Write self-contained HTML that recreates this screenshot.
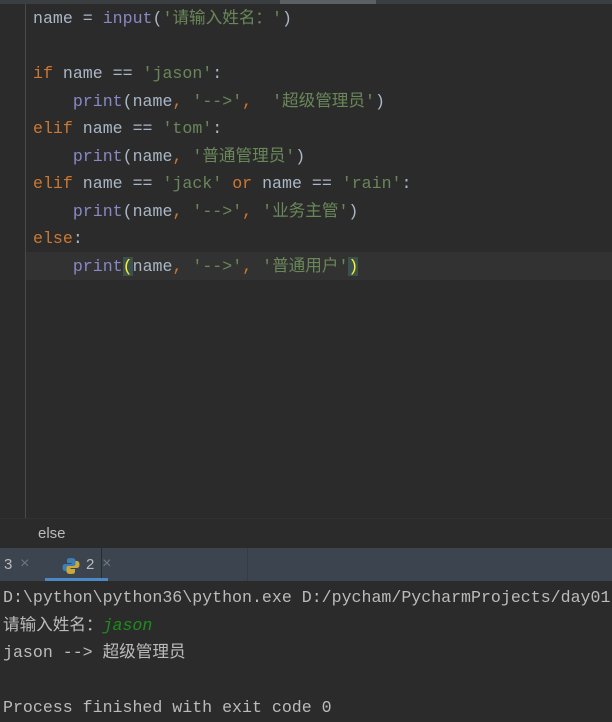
<!DOCTYPE html>
<html><head><meta charset="utf-8"><style>
body{margin:0;width:612px;height:722px;background:#2b2b2b;overflow:hidden;position:relative;font-family:"Liberation Mono","Noto Sans CJK SC",monospace;}
.top{position:absolute;left:0;top:0;width:612px;height:4px;background:#3c3f41}
.thumb{position:absolute;left:280px;top:0;width:96px;height:4px;background:#5d6062}
.gut{position:absolute;left:25px;top:4px;width:1px;height:514px;background:#4a4a4a}
.cur{position:absolute;left:26px;top:252px;width:586px;height:28px;background:#323232}
.code{position:absolute;left:33px;top:5px;font-size:16.6px;line-height:27.5px;color:#a9b7c6;white-space:pre}
.k{color:#cc7832}.s{color:#6a8759}.b{color:#8888c6}
.br{background:#3b514d;color:#ffef28}
.crumb{position:absolute;left:0;top:518px;width:612px;height:30px;background:#2b2b2b;border-top:1px solid #323232;font-family:"Liberation Sans",sans-serif;font-size:15px;color:#bbbbbb}
.tabs{position:absolute;left:0;top:548px;width:612px;height:33px;background:#3c4450}
.con{position:absolute;left:3px;top:584px;font-size:16.6px;line-height:27.5px;color:#bbbbbb;white-space:pre}
</style></head><body>
<div class="top"></div><div class="thumb"></div>
<div class="gut"></div><div class="cur"></div>
<div class="code">name = <span class="b">input</span>(<span class="s">'请输入姓名：'</span>)

<span class="k">if</span> name == <span class="s">'jason'</span>:
    <span class="b">print</span>(name<span class="k">,</span> <span class="s">'--&gt;'</span><span class="k">,</span>  <span class="s">'超级管理员'</span>)
<span class="k">elif</span> name == <span class="s">'tom'</span>:
    <span class="b">print</span>(name<span class="k">,</span> <span class="s">'普通管理员'</span>)
<span class="k">elif</span> name == <span class="s">'jack'</span> <span class="k">or</span> name == <span class="s">'rain'</span>:
    <span class="b">print</span>(name<span class="k">,</span> <span class="s">'--&gt;'</span><span class="k">,</span> <span class="s">'业务主管'</span>)
<span class="k">else</span>:
    <span class="b">print</span><span class="br">(</span>name<span class="k">,</span> <span class="s">'--&gt;'</span><span class="k">,</span> <span class="s">'普通用户'</span><span class="br">)</span></div>
<div class="crumb"><span style="position:absolute;left:38px;top:6px">else</span></div>
<div class="tabs">
<span style="position:absolute;left:4px;top:8px;color:#bbb;font-family:'Liberation Sans',sans-serif;font-size:15px">3</span>
<span style="position:absolute;left:20px;top:7px;color:#6e7680;font-size:16px">×</span>
<svg style="position:absolute;left:62px;top:9px" width="18" height="18" viewBox="0 0 18 18"><path d="M9 1c-4 0-4 1.5-4 2.5V6h4.5v1H3c-2 0-2.5 2-2.5 3.5S1 14 3 14h1.5v-2.5c0-1.5 1-2.5 2.5-2.5h4.5c1.3 0 2-0.8 2-2V3.5C13.5 2 12 1 9 1z" fill="#3c7fb6"/><path d="M9 17c4 0 4-1.5 4-2.5V12H8.5v-1H15c2 0 2.5-2 2.5-3.5S17 4 15 4h-1.5v2.5c0 1.5-1 2.5-2.5 2.5H6.5c-1.3 0-2 .8-2 2v3.5C4.5 16 6 17 9 17z" fill="#c9a93a"/></svg>
<span style="position:absolute;left:86px;top:8px;color:#bbb;font-family:'Liberation Sans',sans-serif;font-size:15px">2</span>
<div style="position:absolute;left:101px;top:0;width:1px;height:33px;background:#2b2b2b"></div>
<span style="position:absolute;left:102px;top:7px;color:#6e7680;font-size:16px">×</span>
<div style="position:absolute;left:247px;top:0;width:1px;height:33px;background:#353b44"></div>
<div style="position:absolute;left:45px;top:30px;width:63px;height:3px;background:#4a88c7"></div>
</div>
<div class="con">D:\python\python36\python.exe D:/pycham/PycharmProjects/day01
请输入姓名：<i style="color:#1a8f1a">jason</i>
jason --&gt; 超级管理员

Process finished with exit code 0</div>
</body></html>
